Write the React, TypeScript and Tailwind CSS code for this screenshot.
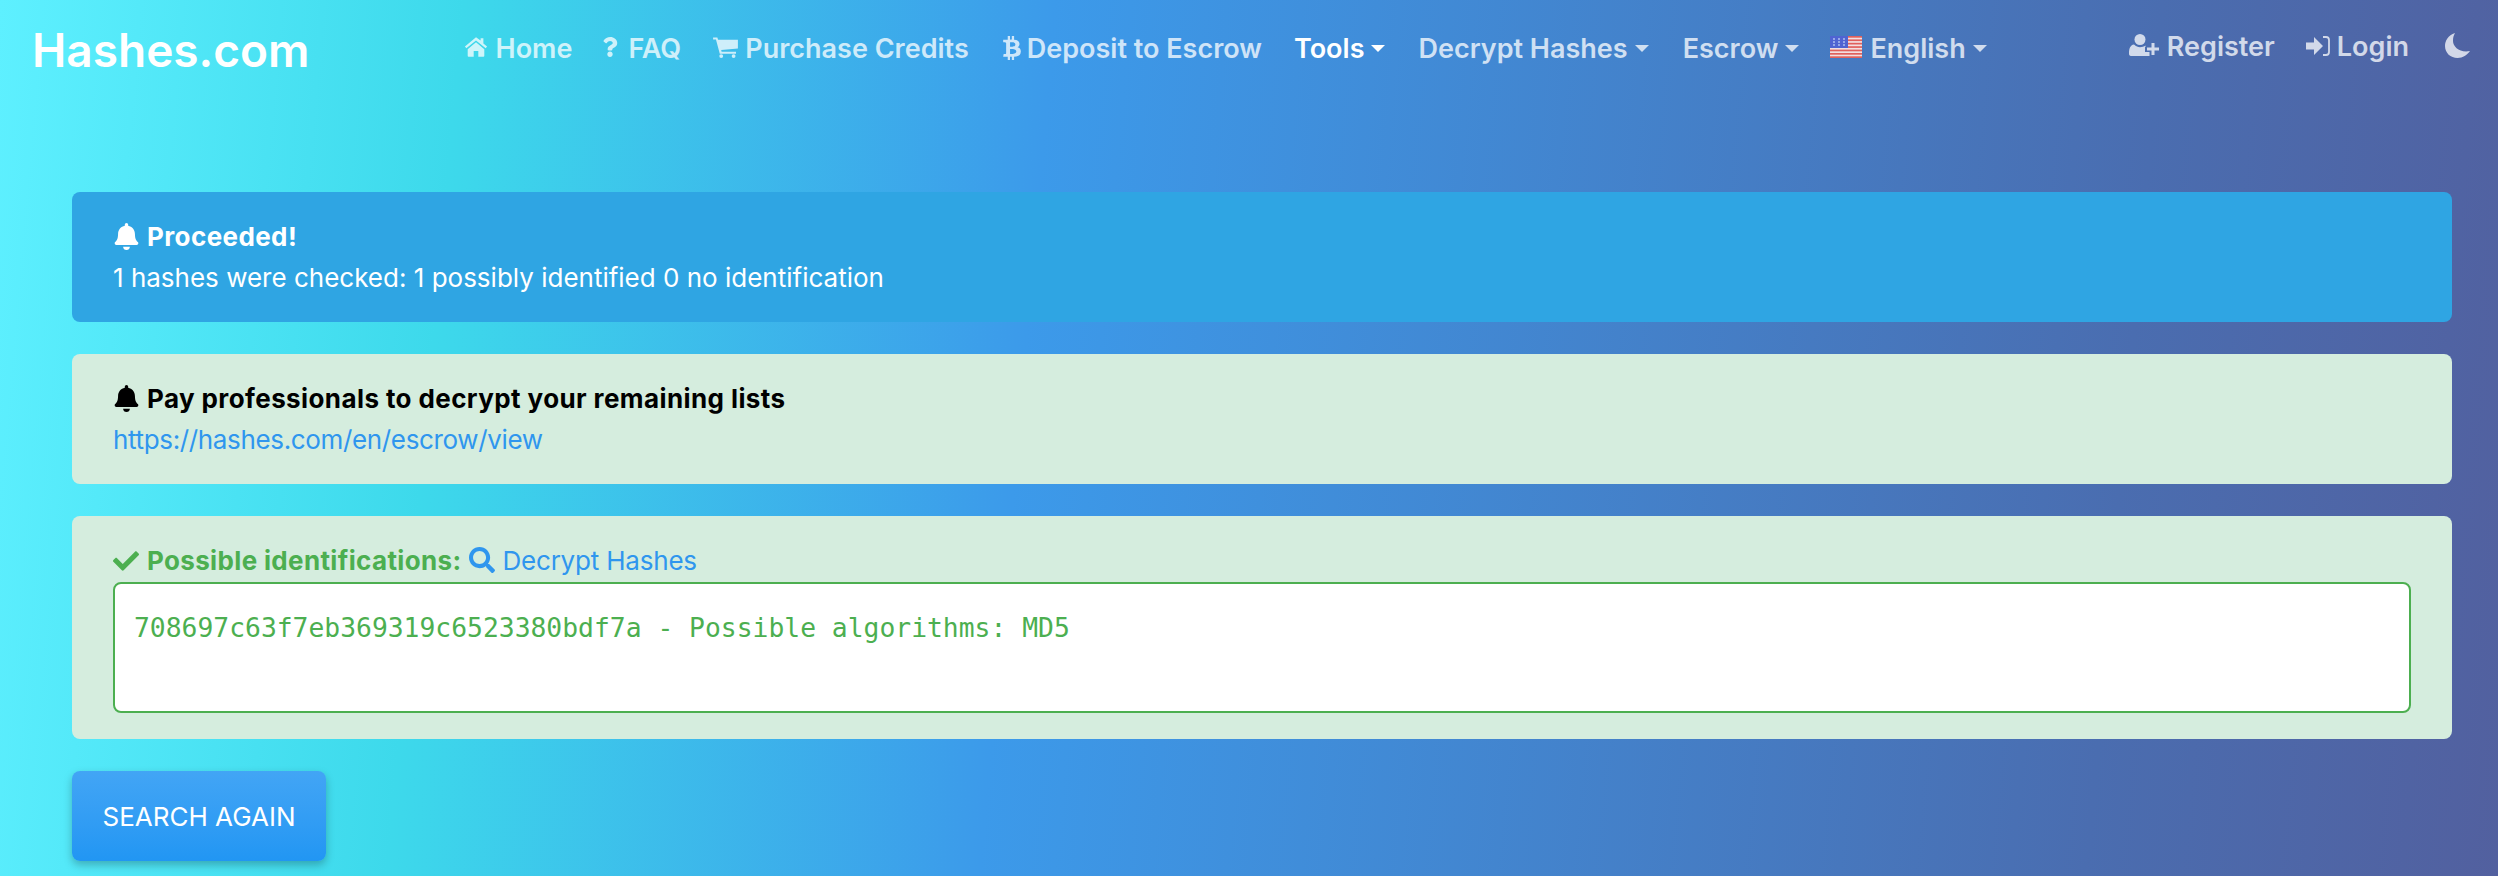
import { FaBell, FaBtc, FaCheck, FaQuestion, FaSearch } from "react-icons/fa";
import type { ReactNode } from "react";

function NavItem({ icon, label, caret, active, className }: { icon?: ReactNode; label: string; caret?: boolean; active?: boolean; className?: string }) {
  return (
    <a className={`flex items-center whitespace-nowrap ${active ? "text-white" : "text-white/75"} ${className ?? ""}`}>
      {icon}
      <span>{label}</span>
      {caret ? <span className="ml-[7px] h-0 w-0 border-x-[7px] border-t-[7px] border-x-transparent border-t-current" /> : null}
    </a>
  );
}

function HomeIcon() {
  return (
    <svg viewBox="0 0 26 22" fill="currentColor" className="mr-[8px] h-[21px] w-[24px] -translate-y-[2px]">
      <path d="M13 1 L1 11 l1.5 2 L13 4.5 L23.5 13 L25 11 L21 7.7 V2 h-3 v2.6 z" />
      <path d="M13 6.5 L4 14 v7 a1 1 0 0 0 1 1 h5.5 v-6 h5 v6 H21 a1 1 0 0 0 1-1 v-7 z" />
    </svg>
  );
}

function CartIcon() {
  return (
    <svg viewBox="0 0 26 22" fill="currentColor" className="mr-[7px] h-[21px] w-[25px] -translate-y-[1px]">
      <path d="M0 0.5 h4.5 l.7 2.5 H26 v9 l-17.5 1.5 .4 2 H24 v2 H7 L3 2.5 H0 z" />
      <circle cx="8.5" cy="20" r="2" />
      <circle cx="21.5" cy="20" r="2" />
    </svg>
  );
}

function UserPlusIcon() {
  return (
    <svg viewBox="0 0 30 22" fill="currentColor" className="mr-[8px] h-[22px] w-[30px] -translate-y-[1px]">
      <circle cx="11" cy="5.5" r="5.5" />
      <path d="M2 22 C0.5 22 0 21 0 19.5 C0 15 1 11 5 10.5 C7 12.5 9 13.2 11 13.2 C13 13.2 15 12.5 16.5 11.5 V13 H16 V18 H20.5 V22 Z" />
      <path d="M22.5 9 h3 v4.5 H30 v3 h-4.5 V21 h-3 v-4.5 H18 v-3 h4.5 z" />
    </svg>
  );
}

function SignInIcon() {
  return (
    <svg viewBox="0 0 24 20" className="mr-[7px] h-[20px] w-[24px]">
      <path d="M0 6.5 h8 V1 l9 9 -9 9 v-5.5 H0 z" fill="currentColor" />
      <path d="M17 1 h3 a3 3 0 0 1 3 3 v12 a3 3 0 0 1-3 3 h-3" fill="none" stroke="currentColor" strokeWidth="1.8" />
    </svg>
  );
}

function MoonIcon() {
  return (
    <svg viewBox="0 0 25 25" fill="currentColor" className="ml-[36px] h-[25px] w-[25px] -translate-y-[1px] text-white/75">
      <path d="M10 0 C3 2 0 8 0 13 C0 20 5.5 25 12.5 25 C18 25 22 22 25 18 C15 20 8 14 8 8 C8 5 8.5 2.5 10 0 z" />
    </svg>
  );
}

function Flag() {
  return (
    <svg viewBox="0 0 32 22" className="mr-[8px] h-[22px] w-[32px] -translate-y-[1px]">
      <rect width="32" height="22" rx="1.5" fill="#f3dfe0" />
      <rect y="0" width="32" height="1.7" fill="#e0605c" />
      <rect y="3.4" width="32" height="1.7" fill="#e0605c" />
      <rect y="6.8" width="32" height="1.7" fill="#e0605c" />
      <rect y="10.2" width="32" height="1.7" fill="#e0605c" />
      <rect y="13.6" width="32" height="1.7" fill="#e0605c" />
      <rect y="17" width="32" height="1.7" fill="#e0605c" />
      <rect y="20.3" width="32" height="1.7" fill="#e0605c" />
      <rect width="18" height="12" fill="#5064d2" />
      <g fill="#b8c6f2">
        <circle cx="4" cy="3" r="0.9" />
        <circle cx="9" cy="3" r="0.9" />
        <circle cx="14" cy="3" r="0.9" />
        <circle cx="4" cy="6" r="0.9" />
        <circle cx="9" cy="6" r="0.9" />
        <circle cx="14" cy="6" r="0.9" />
        <circle cx="4" cy="9" r="0.9" />
        <circle cx="9" cy="9" r="0.9" />
        <circle cx="14" cy="9" r="0.9" />
      </g>
    </svg>
  );
}

export default function App() {
  return (
    <div className="h-[876px] w-[2498px] overflow-hidden bg-[linear-gradient(95deg,#5ef0ff_0%,#3dd9eb_18%,#3c9aea_41%,#4a6db0_84%,#52609f_100%)] font-['Inter',sans-serif] text-[26px] leading-[41px]">
      <nav className="flex h-[96px] items-center font-semibold">
        <a className="ml-[32px] translate-y-[2px] text-[46px] leading-[56px] text-white">Hashes.com</a>
        <div className="ml-[154px] flex items-center text-[27px]">
          <NavItem icon={<HomeIcon />} label="Home" />
          <NavItem className="ml-[28px]" icon={<FaQuestion className="mr-[8px] -translate-y-[1px] text-[20px]" />} label="FAQ" />
          <NavItem className="ml-[32px]" icon={<CartIcon />} label="Purchase Credits" />
          <NavItem className="ml-[31px]" icon={<FaBtc className="mr-[3px] text-[24px]" />} label="Deposit to Escrow" />
          <NavItem className="ml-[32px]" label="Tools" caret active />
          <NavItem className="ml-[33px]" label="Decrypt Hashes" caret />
          <NavItem className="ml-[34px]" label="Escrow" caret />
          <NavItem className="ml-[31px]" icon={<Flag />} label="English" caret />
        </div>
        <div className="ml-auto mr-[28px] flex -translate-y-[2px] items-center text-[27px]">
          <NavItem icon={<UserPlusIcon />} label="Register" />
          <NavItem className="ml-[31px]" icon={<SignInIcon />} label="Login" />
          <MoonIcon />
        </div>
      </nav>

      <main className="ml-[72px] mr-[46px] mt-[96px] flex flex-col items-start">
        <section className="w-full rounded-[8px] bg-[#2fa5e3] px-[41px] py-[24px] text-white">
          <p className="flex items-center font-bold tracking-[0.4px]"><FaBell className="mr-[7px] text-[27px]" />Proceeded!</p>
          <p>1 hashes were checked: 1 possibly identified 0 no identification</p>
        </section>

        <section className="mt-[32px] w-full rounded-[8px] bg-[#d5edde] px-[41px] py-[24px]">
          <p className="flex items-center font-bold tracking-[0.4px] text-black"><FaBell className="mr-[7px] text-[27px]" />Pay professionals to decrypt your remaining lists</p>
          <a className="tracking-[-0.35px] text-[#2f96ee]">https://hashes.com/en/escrow/view</a>
        </section>

        <section className="mt-[32px] w-full rounded-[8px] bg-[#d5edde] px-[41px] pt-[24px] pb-[26px]">
          <p className="flex items-center">
            <FaCheck className="mr-[8px] text-[#4caf50]" />
            <span className="font-bold tracking-[0.35px] text-[#4caf50]">Possible identifications:</span>
            <FaSearch className="ml-[8px] mr-[7px] -translate-y-[1px] text-[#2f96ee]" />
            <a className="tracking-[-0.2px] text-[#2f96ee]">Decrypt Hashes</a>
          </p>
          <textarea
            readOnly
            defaultValue="708697c63f7eb369319c6523380bdf7a - Possible algorithms: MD5"
            className="mt-[1px] block h-[131px] w-full resize-none rounded-[8px] border-2 border-[#4caf50] bg-white pl-[19px] pr-[18px] pt-[24px] pb-[12px] font-['DejaVu_Sans_Mono',monospace] text-[26.35px] leading-[40px] text-[#4caf50] outline-none"
          />
        </section>

        <button className="mt-[32px] h-[90px] w-[254px] rounded-[8px] bg-gradient-to-b from-[#42a5f5] to-[#2196f3] text-[26px] text-white uppercase shadow-[0_4px_8px_rgba(0,0,0,0.25)]">
          Search again
        </button>
      </main>
    </div>
  );
}
